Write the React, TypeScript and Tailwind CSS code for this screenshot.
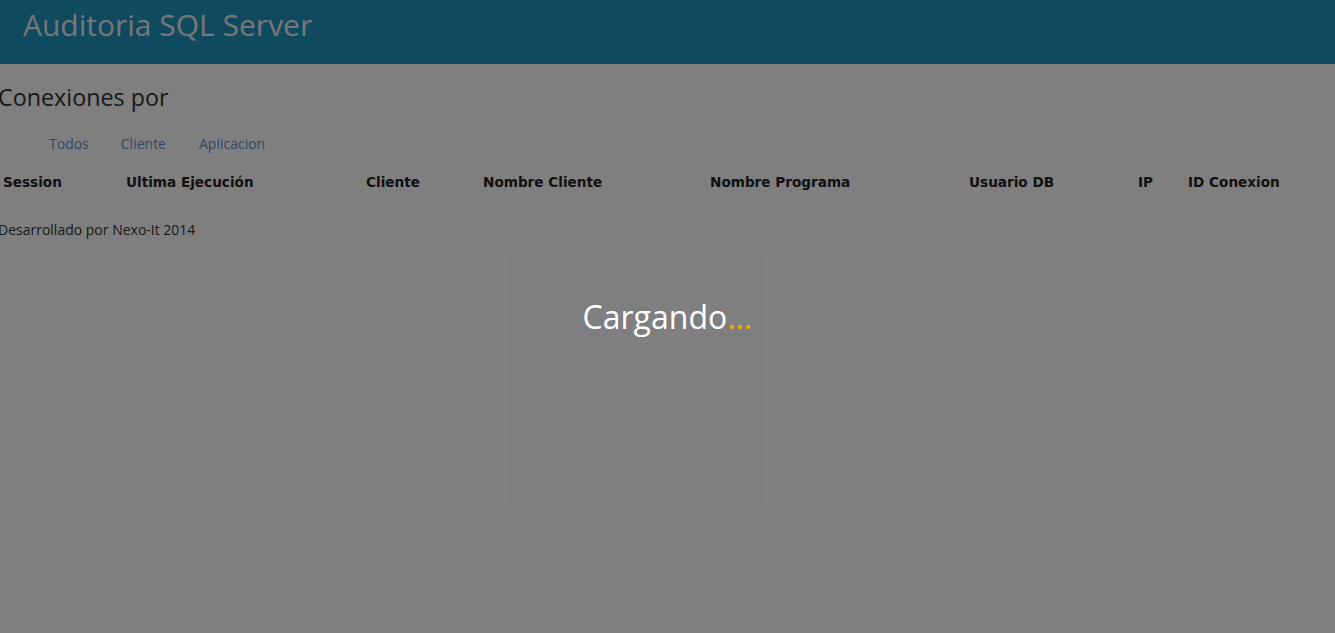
export default function App() {
  const columns = [
    { label: "Session", w: "w-[123px]" },
    { label: "Ultima Ejecución", w: "w-[240px]" },
    { label: "Cliente", w: "w-[117px]" },
    { label: "Nombre Cliente", w: "w-[227px]" },
    { label: "Nombre Programa", w: "w-[259px]" },
    { label: "Usuario DB", w: "w-[169px]" },
    { label: "IP", w: "w-[50px]" },
    { label: "ID Conexion", w: "w-[155px]" },
  ];

  return (
    <div className="relative min-h-[633px] bg-white overflow-hidden font-['Open_Sans',sans-serif] text-[#333]">
      {/* Header */}
      <header className="h-16 bg-[#1e94be] px-[23px]">
        <h1 className="text-[30px] leading-[50px] text-[#eeeeee]">Auditoria SQL Server</h1>
      </header>

      {/* Content */}
      <div className="-ml-[2px]">
        <h2 className="mt-[19px] text-[23.3px] leading-[28px] text-[#333]">Conexiones por</h2>
        <nav className="mt-[23px] flex pl-[41px] text-[14px] leading-[20px]">
          <a className="px-[10px] mr-[12px] text-[#5e8fcb]">Todos</a>
          <a className="px-[10px] mr-[13px] text-[#5e8fcb]">Cliente</a>
          <a className="px-[10px] text-[#5e8fcb]">Aplicacion</a>
        </nav>

        <table className="-ml-[3px] mt-[10px] table-fixed border-collapse font-['DejaVu_Sans',sans-serif]">
          <thead>
            <tr>
              {columns.map((c) => (
                <th
                  key={c.label}
                  className={`${c.w} px-2 py-[8px] text-left text-[13.6px] font-bold leading-[20px] text-[#222]`}
                >
                  {c.label}
                </th>
              ))}
            </tr>
          </thead>
        </table>

        <p className="mt-[20px] text-[14px] leading-[20px] text-[#333]">Desarrollado por Nexo-It 2014</p>
      </div>

      {/* Loading overlay */}
      <div className="absolute inset-0 flex items-center justify-center bg-black/50">
        <p className="text-[32px] leading-[40px] text-white">
          Cargando<span className="text-[#ffa500]">...</span>
        </p>
      </div>
    </div>
  );
}
